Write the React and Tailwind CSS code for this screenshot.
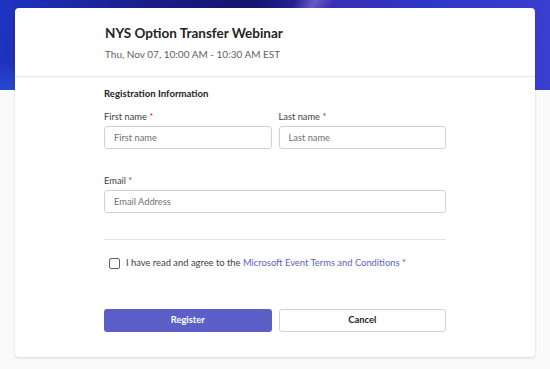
export default function App() {
  const font = { fontFamily: 'Lato, "Noto Sans", sans-serif' };
  return (
    <div className="relative w-[550px] h-[369px] overflow-hidden bg-[#fafafa]" style={font}>
      <div className="absolute inset-x-0 top-0 h-[90px] bg-[linear-gradient(100deg,#1f33c4_0%,#1a1f8a_25%,#14136e_45%,#3a2fb8_60%,#2e36c8_75%,#3b3fd0_100%)]">
        <div className="absolute left-[270px] top-0 w-[40px] h-[90px] bg-[linear-gradient(90deg,transparent,#8a7fe0,transparent)] opacity-60 skew-x-[-30deg]" />
        <div className="absolute left-0 bottom-0 w-[120px] h-[30px] bg-[linear-gradient(0deg,#2a55d8,transparent)] opacity-70" />
      </div>
      <div className="relative mx-[15px] mt-[8px] w-[520px] h-[349px] bg-white rounded-[4px] shadow-[0_1px_3px_rgba(0,0,0,0.15)]">
        <div className="h-[69px] border-b border-[#e6e6e6] pl-[90px] pt-[16px]">
          <div className="text-[13.5px] font-bold text-[#242424] leading-[18px]">NYS Option Transfer Webinar</div>
          <div className="mt-[5px] text-[10px] text-[#616161] leading-[14px]">Thu, Nov 07, 10:00 AM - 10:30 AM EST</div>
        </div>
        <div className="w-[342px] mx-auto pt-[9px]">
          <div className="text-[9.6px] font-bold text-[#242424] leading-[16px]">Registration Information</div>
          <div className="mt-[8px] grid grid-cols-2 gap-x-[7px]">
            <div>
              <div className="text-[9.3px] text-[#424242] leading-[14px]">First name <span className="text-[#c4314b]">*</span></div>
              <div className="mt-[2px] h-[23px] border border-[#d1d1d1] rounded-[3px] flex items-center px-[9px] text-[9.3px] text-[#707070]">First name</div>
            </div>
            <div>
              <div className="text-[9.3px] text-[#424242] leading-[14px]">Last name <span className="text-[#c4314b]">*</span></div>
              <div className="mt-[2px] h-[23px] border border-[#d1d1d1] rounded-[3px] flex items-center px-[9px] text-[9.3px] text-[#707070]">Last name</div>
            </div>
          </div>
          <div className="mt-[25px]">
            <div className="text-[9.3px] text-[#424242] leading-[14px]">Email <span className="text-[#c4314b]">*</span></div>
            <div className="mt-[2px] h-[23px] border border-[#d1d1d1] rounded-[3px] flex items-center px-[9px] text-[9.3px] text-[#707070]">Email Address</div>
          </div>
          <div className="mt-[26px] border-t border-[#e6e6e6]" />
          <div className="mt-[16px] flex items-center pl-[5px]">
            <div className="shrink-0 w-[11px] h-[11px] border border-[#616161] rounded-[2px]" />
            <div className="ml-[6px] whitespace-nowrap text-[9.4px] text-[#424242] leading-[14px]">
              I have read and agree to the <span className="text-[#5b5fc7]">Microsoft Event Terms and Conditions</span> <span className="text-[#c4314b]">*</span>
            </div>
          </div>
          <div className="mt-[39px] grid grid-cols-2 gap-x-[7px]">
            <div className="h-[23px] rounded-[3px] bg-[#5b5fc7] flex items-center justify-center text-[9.4px] font-bold text-white">Register</div>
            <div className="h-[23px] rounded-[3px] border border-[#d1d1d1] bg-white flex items-center justify-center text-[9.4px] font-bold text-[#242424]">Cancel</div>
          </div>
        </div>
      </div>
    </div>
  );
}
